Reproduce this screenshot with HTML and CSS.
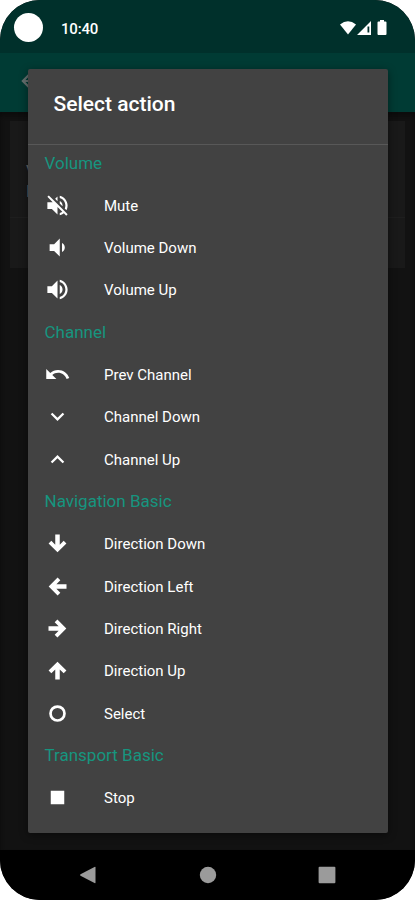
FILE: index.html
```html
<!DOCTYPE html>
<html lang="en">
<head>
<meta charset="utf-8">
<title>Select action</title>
<link rel="stylesheet" href="styles.css">
</head>
<body>
<div class="phone">
  <header class="status">
    <span class="camera"></span>
    <span class="time">10:40</span>
    <svg class="indicators" viewBox="0 0 50 20">
      <path d="M1 5.5Q9-1 17 5.500L9 15.500Z"/>
      <path fill-rule="evenodd" d="M32 2V16H18ZM28.500 7.500V13.500H30.300V7.500Z"/>
      <path d="M39.500 2.500h1.500V1h4v1.500H46.500q1 0 1 1V15q0 1-1 1h-7q-1 0-1-1V3.500q0-1 1-1Z"/>
    </svg>
  </header>
  <div class="appbar">
    <svg class="back" viewBox="0 0 24 24"><path d="M20 11H7.830l5.590-5.590L12 4l-8 8 8 8 1.410-1.410L7.830 13H20z"/></svg>
  </div>
  <main class="page">
    <div class="card">
      <div class="card-main"><span>V</span><span>In</span></div>
    </div>
  </main>
  <nav class="navbar">
    <svg viewBox="0 0 18 18"><path d="M16.500 1.500V16.500Q16.500 17.500 15.500 17L1.500 9.700Q.500 9 1.500 8.300L15.500 1Q16.500.500 16.500 1.500Z"/></svg>
    <svg viewBox="0 0 18 18"><circle cx="9" cy="9" r="8.200"/></svg>
    <svg viewBox="0 0 18 18"><rect x=".600" y=".800" width="16.800" height="16.400" rx="1"/></svg>
  </nav>
  <section class="dialog">
    <h1>Select action</h1>
    <div class="list">
      <h2>Volume</h2>
      <div class="row"><svg viewBox="0 0 24 24"><path d="M16.500 12c0-1.770-1.020-3.290-2.500-4.030v2.210l2.450 2.450c.03-.2.05-.41.05-.63zm2.500 0c0 .94-.2 1.820-.54 2.640l1.510 1.510C20.630 14.910 21 13.500 21 12c0-4.280-2.990-7.860-7-8.770v2.060c2.890.86 5 3.540 5 6.710zM4.270 3L3 4.270 7.730 9H3v6h4l5 5v-6.730l4.250 4.250c-.67.52-1.420.93-2.250 1.180v2.060c1.380-.31 2.630-.95 3.690-1.810L19.730 21 21 19.730l-9-9L4.270 3zM12 4L9.910 6.090 12 8.180V4z"/></svg><span>Mute</span></div>
      <div class="row"><svg viewBox="0 0 24 24"><path d="M18.500 12c0-1.770-1.020-3.290-2.500-4.030v8.050c1.480-.73 2.500-2.250 2.500-4.020zM5 9v6h4l5 5V4L9 9H5z"/></svg><span>Volume Down</span></div>
      <div class="row"><svg viewBox="0 0 24 24"><path d="M3 9v6h4l5 5V4L7 9H3zm13.500 3c0-1.770-1.020-3.290-2.500-4.030v8.050c1.480-.73 2.500-2.250 2.500-4.020zM14 3.230v2.060c2.890.86 5 3.540 5 6.710s-2.110 5.850-5 6.710v2.060c4.010-.91 7-4.490 7-8.770s-2.990-7.860-7-8.770z"/></svg><span>Volume Up</span></div>
      <h2>Channel</h2>
      <div class="row"><svg viewBox="0 0 24 24"><path d="M12.500 8c-2.650 0-5.050.99-6.900 2.600L2 7v9h9l-3.620-3.620c1.390-1.160 3.160-1.880 5.120-1.880 3.540 0 6.550 2.310 7.600 5.500l2.370-.78C21.080 11.030 17.150 8 12.500 8z"/></svg><span>Prev Channel</span></div>
      <div class="row"><svg viewBox="0 0 24 24"><path d="M16.590 8.590L12 13.170 7.410 8.590 6 10l6 6 6-6z"/></svg><span>Channel Down</span></div>
      <div class="row"><svg viewBox="0 0 24 24"><path d="M12 8l-6 6 1.410 1.410L12 10.830l4.590 4.580L18 14z"/></svg><span>Channel Up</span></div>
      <h2>Navigation Basic</h2>
      <div class="row"><svg viewBox="0 0 24 24"><path d="M10 4h4v9l3.500-3.500 2.420 2.420L12 19.840l-7.920-7.920L6.500 9.500 10 13z"/></svg><span>Direction Down</span></div>
      <div class="row"><svg viewBox="0 0 24 24"><path d="M20 10v4h-9l3.500 3.500-2.420 2.420L4.160 12l7.920-7.920L14.500 6.500 11 10z"/></svg><span>Direction Left</span></div>
      <div class="row"><svg viewBox="0 0 24 24"><path d="M4 10v4h9l-3.500 3.500 2.420 2.420L19.840 12l-7.920-7.920L9.500 6.500 13 10z"/></svg><span>Direction Right</span></div>
      <div class="row"><svg viewBox="0 0 24 24"><path d="M14 20h-4v-9l-3.500 3.500-2.420-2.420L12 4.160l7.920 7.920-2.420 2.420L14 11z"/></svg><span>Direction Up</span></div>
      <div class="row"><svg viewBox="0 0 24 24"><circle class="ring" cx="12" cy="12" r="6.200"/></svg><span>Select</span></div>
      <h2>Transport Basic</h2>
      <div class="row"><svg viewBox="0 0 24 24"><path d="M6 6h12v12H6z"/></svg><span>Stop</span></div>
    </div>
  </section>
</div>
</body>
</html>
```
FILE: styles.css
```css
* { box-sizing: border-box; }
body { margin: 0; background: #fff; font-family: Roboto, sans-serif; }
svg { display: block; flex: none; fill: #fff; }
.phone {
  position: relative;
  display: flex;
  flex-direction: column;
  width: 415px;
  height: 900px;
  overflow: hidden;
  border-radius: 40px;
  background: #121212;
}
.status {
  display: flex;
  align-items: center;
  height: 53px;
  padding: 1px 27px 0 14px;
  background: #00302b;
}
.camera { width: 29px; height: 29px; border-radius: 50%; background: #fff; }
.time { margin: 3px 0 0 18px; color: #fff; font-size: 15px; font-weight: 500; letter-spacing: -.2px; }
.indicators { width: 50px; height: 20px; margin: 3px -.500px 0 auto; }
.appbar { height: 59px; padding: 16px 0 0 17px; background: #003b34; }
.back { width: 26px; height: 26px; margin-top: -1px; fill: #66706f; }
.page { flex: 1; padding: 9px 10px; box-shadow: inset 0 4px 4px #0c0c0c; }
.card { height: 147px; background: #191919; }
.card-main {
  display: flex;
  flex-direction: column;
  height: 97px;
  padding: 41px 16px 0;
  border-bottom: 1px solid #1e1e1e;
  color: #666;
  font-size: 16px;
  line-height: 20px;
}
.navbar {
  display: flex;
  align-items: center;
  justify-content: space-between;
  height: 50px;
  padding: 0 79px;
  background: #000;
}
.navbar svg { width: 18px; height: 18px; fill: #9b9b9b; }
.dialog {
  position: absolute;
  left: 28px;
  top: 69px;
  width: 360px;
  height: 764px;
  border-radius: 2px;
  background: #424242;
  box-shadow: 0 2px 8px rgba(0, 0, 0, .45);
}
h1 {
  height: 75.500px;
  margin: 0;
  padding-left: 25.500px;
  border-bottom: 1.500px solid #585858;
  color: #fff;
  font-size: 21px;
  font-weight: 500;
  line-height: 71px;
}
.list { margin-top: -2.700px; padding-left: 16.500px; }
h2 {
  height: 42.330px;
  margin: 0;
  color: #16957f;
  font-size: 17px;
  font-weight: 400;
  line-height: 42.330px;
}
.row { display: flex; align-items: center; height: 42.330px; color: #fff; font-size: 15px; }
.row svg { width: 27px; height: 27px; margin: 0 33.300px 0 -.800px; }
.row span { padding-top: 1px; }
.ring { fill: none; stroke: #fff; stroke-width: 2.400; }
```
